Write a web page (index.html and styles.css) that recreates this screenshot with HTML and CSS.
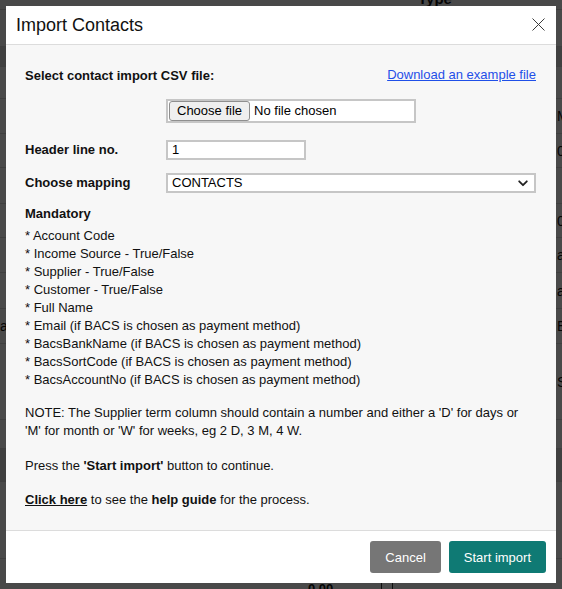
FILE: index.html
```html
<!DOCTYPE html>
<html lang="en">
<head>
<meta charset="utf-8">
<title>Import Contacts</title>
<link rel="stylesheet" href="styles.css">
</head>
<body>
<div class="page">
  <div class="page-head"><span class="th">Type</span></div>
  <div class="trow h37"><span class="cl"></span><span class="cm"></span><span class="cr"></span></div>
  <div class="trow h20 dark"><span class="cl"></span><span class="cm"></span><span class="cr"></span></div>
  <div class="trow h32"><span class="cl"></span><span class="cm"></span><span class="cr"></span></div>
  <div class="trow h35"><span class="cl"></span><span class="cm"></span><span class="cr">M</span></div>
  <div class="trow h34"><span class="cl"></span><span class="cm"></span><span class="cr">0</span></div>
  <div class="trow h36"><span class="cl"></span><span class="cm"></span><span class="cr"></span></div>
  <div class="trow h34"><span class="cl"></span><span class="cm"></span><span class="cr">0</span></div>
  <div class="trow h35"><span class="cl"></span><span class="cm"></span><span class="cr">a</span></div>
  <div class="trow h36"><span class="cl"></span><span class="cm"></span><span class="cr">a</span></div>
  <div class="trow h35"><span class="cl">ac</span><span class="cm"></span><span class="cr">E</span></div>
  <div class="trow h76"><span class="cl"></span><span class="cm"></span><span class="cr">S</span></div>
  <div class="trow h29"><span class="cl"></span><span class="cm"></span><span class="cr"></span></div>
  <div class="trow h33 dark"><span class="cl"></span><span class="cm"></span><span class="cr"></span></div>
  <div class="trow h77"><span class="cl"></span><span class="cm"></span><span class="cr"></span></div>
  <div class="tfoot"><span class="amount">0.00</span><span class="chk"></span></div>
</div>
<div class="overlay"></div>

<div class="modal" role="dialog" aria-labelledby="modal-title">
  <div class="modal-header">
    <h2 class="modal-title" id="modal-title">Import Contacts</h2>
    <button class="close" type="button" aria-label="Close">
      <svg width="13" height="13" viewBox="0 0 13 13" aria-hidden="true">
        <path d="M0.5 0.5 L12.5 12.5 M12.5 0.5 L0.5 12.5" stroke="#3a3a3a" stroke-width="1" fill="none"/>
      </svg>
    </button>
  </div>

  <div class="modal-body">
    <div class="top-row">
      <label class="strong">Select contact import CSV file:</label>
      <a class="link" href="#">Download an example file</a>
    </div>

    <div class="field-row file-row">
      <span class="field-label"></span>
      <div class="file-input">
        <span class="file-btn">Choose file</span>
        <span class="file-name">No file chosen</span>
      </div>
    </div>

    <div class="field-row header-row">
      <label class="field-label strong">Header line no.</label>
      <div class="text-input">1</div>
    </div>

    <div class="field-row mapping-row">
      <label class="field-label strong">Choose mapping</label>
      <div class="select">
        <span>CONTACTS</span>
        <svg class="chev" width="10" height="7" viewBox="0 0 10 7" aria-hidden="true">
          <path d="M1.2 1.3 L5 5.2 L8.8 1.3" stroke="#222" stroke-width="1.8" fill="none" stroke-linecap="round" stroke-linejoin="round"/>
        </svg>
      </div>
    </div>

    <div class="strong mandatory">Mandatory</div>
    <ul class="req-list">
      <li>* Account Code</li>
      <li>* Income Source - True/False</li>
      <li>* Supplier - True/False</li>
      <li>* Customer - True/False</li>
      <li>* Full Name</li>
      <li>* Email (if BACS is chosen as payment method)</li>
      <li>* BacsBankName (if BACS is chosen as payment method)</li>
      <li>* BacsSortCode (if BACS is chosen as payment method)</li>
      <li>* BacsAccountNo (if BACS is chosen as payment method)</li>
    </ul>

    <p class="note">NOTE: The Supplier term column should contain a number and either a 'D' for days or 'M' for month or 'W' for weeks, eg 2 D, 3 M, 4 W.</p>
    <p class="press">Press the <b>'Start import'</b> button to continue.</p>
    <p class="help"><a class="click" href="#">Click here</a> to see the <b>help guide</b> for the process.</p>
  </div>

  <div class="modal-footer">
    <button class="btn btn-cancel" type="button">Cancel</button>
    <button class="btn btn-primary" type="button">Start import</button>
  </div>
</div>
</body>
</html>
```

FILE: styles.css
```css
* {
  box-sizing: border-box;
}

html,
body {
  margin: 0;
  padding: 0;
}

body {
  width: 562px;
  height: 589px;
  overflow: hidden;
  background: #f6f6f6;
  font-family: "Liberation Sans", Arial, Helvetica, sans-serif;
  color: #111;
}

/* ---------- background page (under overlay) ---------- */
.page {
  width: 562px;
}

.page-head {
  height: 18px;
  padding-left: 418px;
  border-bottom: 1px solid #cfcfcf;
}

.page-head .th {
  display: block;
  margin-top: -8px;
  font-weight: bold;
  font-size: 15px;
  line-height: 14px;
}

.trow {
  display: grid;
  grid-template-columns: 8px 549px 1fr;
  align-items: center;
  border-bottom: 1px solid #d4d4d4;
  font-size: 14px;
}

.h20 { height: 20px; }
.h29 { height: 29px; }
.h32 { height: 32px; }
.h33 { height: 33px; }
.h34 { height: 34px; }
.h35 { height: 35px; }
.h36 { height: 36px; }
.h37 { height: 37px; }
.h76 { height: 76px; }
.h77 { height: 77px; }

.dark {
  background: #d6d6d6;
}

.cl {
  text-align: right;
  overflow: hidden;
  white-space: nowrap;
}

.cr {
  white-space: nowrap;
}

.tfoot {
  display: flex;
  align-items: center;
  gap: 48px;
  padding-left: 308px;
  height: 58px;
  font-size: 13px;
  font-weight: bold;
}

.chk {
  width: 12px;
  height: 12px;
  border: 1px solid #333;
  background: #fff;
}

.overlay {
  position: fixed;
  inset: 0;
  background: rgba(0, 0, 0, 0.7);
}

/* ---------- modal ---------- */
.modal {
  position: fixed;
  top: 6px;
  left: 6px;
  width: 550px;
  height: 577px;
  display: flex;
  flex-direction: column;
  background: #ffffff;
}

.modal-header {
  height: 39px;
  flex: none;
  display: flex;
  align-items: center;
  justify-content: space-between;
  padding: 0 11px 0 10px;
  border-bottom: 1px solid #dcdcdc;
}

.modal-title {
  margin: 0;
  font-size: 18px;
  font-weight: normal;
  line-height: 38px;
  color: #111;
}

.close {
  width: 13px;
  height: 13px;
  padding: 0;
  margin: 0 0 1px 0;
  border: 0;
  background: transparent;
  display: flex;
}

.modal-body {
  flex: 1;
  background: #f7f7f7;
  padding: 22px 20px 0 19px;
  font-size: 13px;
  line-height: 18px;
}

.strong {
  font-weight: bold;
}

.top-row {
  display: flex;
  justify-content: space-between;
  align-items: flex-start;
}

.link {
  color: #1f4fe8;
  text-decoration: underline;
  margin-top: -1px;
}

.field-row {
  display: grid;
  grid-template-columns: 141px auto;
  align-items: center;
  justify-content: start;
}

.file-row {
  margin-top: 14px;
}

.file-input {
  width: 250px;
  height: 24px;
  border: 2px solid #c6c6c6;
  background: #ffffff;
  display: flex;
  align-items: center;
  padding-left: 1px;
}

.file-btn {
  height: 20px;
  padding: 0 7px;
  border: 1px solid #8f8f8f;
  border-radius: 3px;
  background: #efefef;
  line-height: 18px;
  color: #000;
}

.file-name {
  margin-left: 4px;
  color: #000;
}

.header-row {
  margin-top: 17px;
}

.text-input {
  width: 140px;
  height: 20px;
  border: 2px solid #c6c6c6;
  background: #ffffff;
  padding: 0 4px;
  line-height: 16px;
  color: #000;
}

.mapping-row {
  margin-top: 13px;
}

.select {
  width: 370px;
  height: 20px;
  border: 2px solid #c6c6c6;
  background: #ffffff;
  padding: 0 6px 0 4px;
  display: flex;
  align-items: center;
  justify-content: space-between;
  line-height: 16px;
  color: #000;
}

.chev {
  display: block;
}

.mandatory {
  margin-top: 12px;
}

.req-list {
  list-style: none;
  margin: 4px 0 0 0;
  padding: 0;
}

.note,
.press,
.help {
  margin: 15px 0 0 0;
}

.press {
  margin-top: 17px;
}

.help {
  margin-top: 16px;
}

.click {
  color: #111;
  font-weight: bold;
  text-decoration: underline;
}

.modal-footer {
  flex: none;
  height: 53px;
  border-top: 1px solid #dcdcdc;
  background: #ffffff;
  display: flex;
  justify-content: flex-end;
  align-items: flex-start;
  gap: 8px;
  padding: 10px 10px 0 0;
}

.btn {
  height: 32px;
  padding: 0 15px;
  border: 0;
  border-radius: 3px;
  font-family: "Liberation Sans", Arial, Helvetica, sans-serif;
  font-size: 13px;
  color: #ffffff;
}

.btn-cancel {
  background: #767676;
}

.btn-primary {
  background: #0f7a74;
}
```
